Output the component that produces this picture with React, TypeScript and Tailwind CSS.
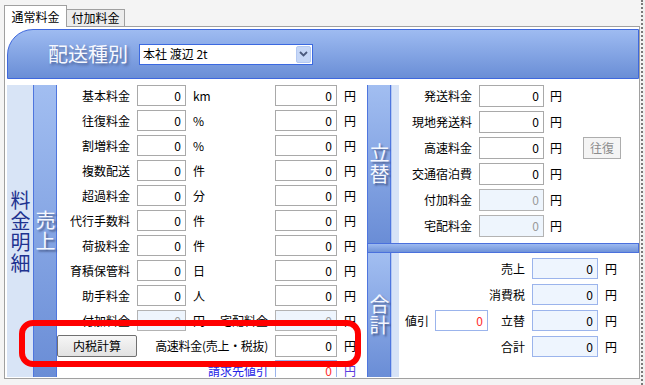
import React from 'react';

type Tone = 'plain' | 'off' | 'blue' | 'red';

const toneClass: Record<Tone, string> = {
  plain: 'border-[#a9a9a9] bg-white text-black',
  off: 'border-[#b3b3b3] bg-[#eef5fd] text-[#9a9a9a]',
  blue: 'border-[#9bb4ec] bg-[#eef5fe] text-black',
  red: 'border-[#9bb4ec] bg-white text-[#ff2b2b]',
};

const Field = ({ w, tone = 'plain', h = 'h-[21px]' }: { w: string; tone?: Tone; h?: string }) => (
  <div className={`${w} ${h} ${toneClass[tone]} shrink-0 border flex items-center justify-end pr-[4px] leading-none`}>0</div>
);

// vertical captions, written top to bottom
const Vertical = ({ text, className }: { text: string; className: string }) => (
  <div className={`[writing-mode:vertical-rl] [text-orientation:upright] leading-none tracking-[1px] ${className}`}>{text}</div>
);

const strip = 'w-[24px] shrink-0 flex items-center justify-center border-x border-[#4f76de] bg-gradient-to-b from-[#a2beF1] to-[#6a8dd6]';
const stripText = 'text-[20px] text-[#f5f8ff] [text-shadow:2px_2px_2px_rgba(30,40,80,0.55)]';

const leftRows: { label: string; unit: string; off?: boolean; extra?: string }[] = [
  { label: '基本料金', unit: 'km' },
  { label: '往復料金', unit: '%' },
  { label: '割増料金', unit: '%' },
  { label: '複数配送', unit: '件' },
  { label: '超過料金', unit: '分' },
  { label: '代行手数料', unit: '件' },
  { label: '荷扱料金', unit: '件' },
  { label: '育積保管料', unit: '日' },
  { label: '助手料金', unit: '人' },
  { label: '付加料金', unit: '円', off: true, extra: '宅配料金' },
];

const tatekae: { label: string; off?: boolean; btn?: boolean }[] = [
  { label: '発送料金' },
  { label: '現地発送料' },
  { label: '高速料金', btn: true },
  { label: '交通宿泊費' },
  { label: '付加料金', off: true },
  { label: '宅配料金', off: true },
];

const totals = ['売上', '消費税', '立替', '合計'];

export default function App() {
  return (
    <div className="relative w-[645px] h-[385px] overflow-hidden bg-[#f0f0f0] font-['Noto_Sans_CJK_JP','Noto_Sans',sans-serif] text-[12px] text-black">
      <div className="w-[643px] h-full border-r-[2px] border-dotted border-[#7a7a7a] bg-[#f4f4f4]">
        {/* tabs */}
        <div className="flex items-end h-[26px] pl-[4px]">
          <div className="relative z-10 w-[63px] h-[22px] -mb-[1px] border border-b-0 border-[#a0a0a0] bg-white flex items-center justify-center leading-none">通常料金</div>
          <div className="w-[58px] h-[17px] border border-l-0 border-b-0 border-[#a0a0a0] bg-[#ececec] flex items-center justify-center leading-none">付加料金</div>
        </div>

        <div className="ml-[4px] w-[636px] h-[353px] border border-[#a0a0a0] bg-white pl-[2px] pt-[2px]">
          {/* header */}
          <div className="w-[632px] h-[50px] rounded-tl-[26px] border border-[#3f68dd] bg-gradient-to-b from-[#9ebbf1] to-[#6a8ed6] flex items-center pl-[40px]">
            <span className="text-[20px] leading-none text-[#f7f9ff] [text-shadow:2px_2px_3px_rgba(30,40,80,0.5)]">配送種別</span>
            <div className="ml-[11px] w-[174px] h-[21px] border border-[#3b69e0] bg-white flex items-center pl-[3px] pr-[1px]">
              <span className="flex-1 leading-none">本社 渡辺 2t</span>
              <div className="w-[15px] h-[17px] rounded-[2px] bg-[#c6d7f7] border border-[#b3c8f2] flex items-center justify-center">
                <svg width="9" height="6" viewBox="0 0 9 6"><path d="M1 1 L4.5 4.5 L8 1" fill="none" stroke="#4b5a7e" strokeWidth="1.8" /></svg>
              </div>
            </div>
          </div>

          {/* body */}
          <div className="mt-[6px] h-[292px] flex">
            <div className="w-[26px] shrink-0 bg-[#d8e4f6] flex items-center justify-center pt-[2px]">
              <Vertical text="料金明細" className="text-[20px] text-[#1e3390]" />
            </div>
            <div className={strip}>
              <Vertical text="売上" className={stripText} />
            </div>

            {/* sales form */}
            <div className="w-[310px] shrink-0 h-full overflow-hidden">
              {leftRows.map((r) => (
                <div key={r.label} className="flex items-center h-[21px] mb-[4px]">
                  <div className="w-[73px] text-right leading-none">{r.label}</div>
                  <div className="ml-[7px]"><Field w="w-[49px]" tone={r.off ? 'off' : 'plain'} /></div>
                  <div className="ml-[7px] w-[75px] flex items-center leading-none">
                    <span>{r.unit}</span>
                    {r.extra && <span className="ml-auto">{r.extra}</span>}
                  </div>
                  <div className="ml-[7px]"><Field w="w-[62px]" tone={r.off ? 'off' : 'plain'} /></div>
                  <span className="ml-[7px] leading-none">円</span>
                </div>
              ))}
              <div className="flex items-center h-[22px] mb-[3px]">
                <button className="w-[80px] h-[22px] shrink-0 rounded-[2px] border border-[#707070] bg-gradient-to-b from-[#f6f6f6] to-[#e2e2e2] leading-none">内税計算</button>
                <div className="w-[131px] text-right leading-none tracking-[-0.3px]">高速料金(売上・税抜)</div>
                <div className="ml-[7px]"><Field w="w-[62px]" h="h-[22px]" /></div>
                <span className="ml-[7px] leading-none">円</span>
              </div>
              <div className="flex items-center h-[21px]">
                <div className="w-[211px] text-right leading-none text-[#2424e6]">請求先値引</div>
                <div className="ml-[7px]"><Field w="w-[62px]" tone="red" /></div>
                <span className="ml-[7px] leading-none text-[#5a3ce0]">円</span>
              </div>
            </div>

            {/* advances + totals */}
            <div className="flex-1 flex flex-col">
              <div className="h-[158px] flex">
                <div className={strip}>
                  <Vertical text="立替" className={stripText} />
                </div>
                <div className="w-[8px] shrink-0 bg-[#d7e3f7] border-l border-[#b2c7f2]" />
                <div>
                  {tatekae.map((r) => (
                    <div key={r.label} className="flex items-center h-[22px] mb-[4px]">
                      <div className="w-[73px] text-right leading-none">{r.label}</div>
                      <div className="ml-[7px]"><Field w="w-[65px]" h="h-[22px]" tone={r.off ? 'off' : 'plain'} /></div>
                      <span className="ml-[6px] leading-none">円</span>
                      {r.btn && (
                        <div className="ml-[21px] w-[38px] h-[22px] border border-[#adadad] bg-[#f4f4f4] text-[#8c8c8c] flex items-center justify-center leading-none">往復</div>
                      )}
                    </div>
                  ))}
                </div>
              </div>

              <div className="h-[10px] border border-[#4a70dd] bg-gradient-to-b from-[#9dbaf0] to-[#6f92d8]" />

              <div className="flex-1 flex">
                <div className={strip}>
                  <Vertical text="合計" className={stripText} />
                </div>
                <div className="w-[8px] shrink-0 bg-[#d7e3f7] border-l border-[#b2c7f2]" />
                <div className="pt-[5px]">
                  {totals.map((t) => (
                    <div key={t} className="flex items-center h-[21px] mb-[5px]">
                      <div className="ml-[6px] w-[83px] flex items-center">
                        {t === '立替' && (
                          <>
                            <span className="w-[24px] leading-none">値引</span>
                            <div className="ml-[6px]"><Field w="w-[53px]" tone="red" /></div>
                          </>
                        )}
                      </div>
                      <div className="w-[37px] text-right leading-none">{t}</div>
                      <div className="ml-[7px]"><Field w="w-[66px]" tone="blue" /></div>
                      <span className="ml-[7px] leading-none">円</span>
                    </div>
                  ))}
                </div>
              </div>
            </div>
          </div>
        </div>
      </div>

      {/* red annotation frame */}
      <div className="absolute left-[19px] top-[320px] w-[342px] h-[47px] rounded-[14px] border-[6px] border-[#ff0000]" />
    </div>
  );
}
